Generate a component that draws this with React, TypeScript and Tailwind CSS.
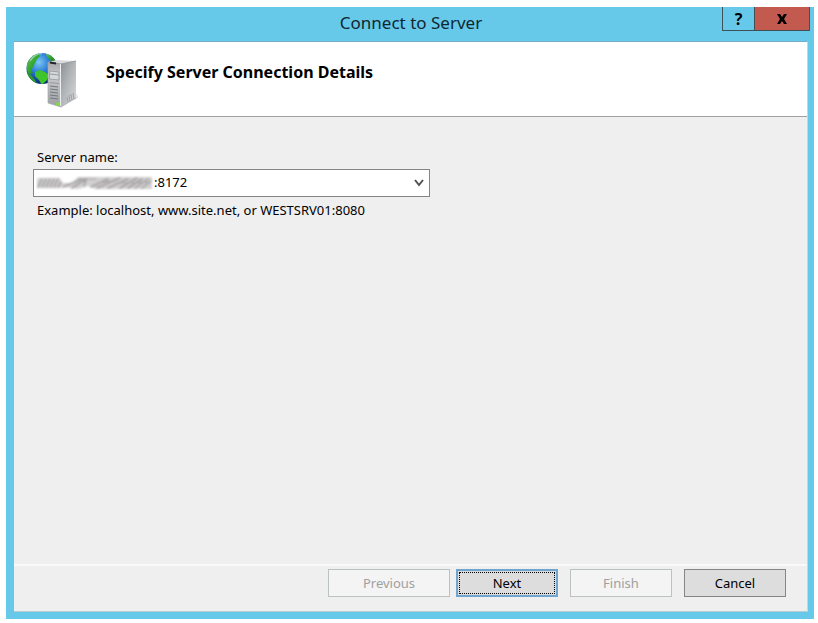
import type { ReactNode } from 'react';

function ServerIcon() {
  return (
    <svg viewBox="0 0 52 56" className="h-14 w-[52px] shrink-0" aria-hidden="true">
      <defs>
        <radialGradient id="ocean" cx="0.4" cy="0.3" r="0.7">
          <stop offset="0" stopColor="#7cc8f5" />
          <stop offset="0.5" stopColor="#2878d2" />
          <stop offset="1" stopColor="#0a2474" />
        </radialGradient>
        <linearGradient id="land" x1="0" y1="0" x2="1" y2="1">
          <stop offset="0" stopColor="#7cc46a" />
          <stop offset="0.5" stopColor="#35a832" />
          <stop offset="1" stopColor="#1d7a1e" />
        </linearGradient>
        <linearGradient id="front" x1="0" y1="0" x2="0" y2="1">
          <stop offset="0" stopColor="#a2a5a9" />
          <stop offset="0.3" stopColor="#c9ccce" />
          <stop offset="1" stopColor="#9da0a3" />
        </linearGradient>
        <linearGradient id="side" x1="0" y1="0" x2="1" y2="1">
          <stop offset="0" stopColor="#8c8f93" />
          <stop offset="0.45" stopColor="#b2b5b8" />
          <stop offset="1" stopColor="#d9dbdd" />
        </linearGradient>
        <clipPath id="globe">
          <circle cx="16" cy="16.500" r="15.5" />
        </clipPath>
      </defs>
      <path d="M34 54L52 46L51 42L34 50Z" fill="#d8d8d8" opacity="0.7" />
      <circle cx="16" cy="16.500" r="15.5" fill="url(#ocean)" />
      <g clipPath="url(#globe)" fill="url(#land)">
        <path d="M0 16L2 8L7 3L12 1L14 4L11 7L9 11L7 15L5 18L7 21L3 22Z" />
        <path d="M19 1L26 3L30 9L25 9L22 6Z" />
        <path d="M9 20L14 18L19 20L23 23L21 28L16 33L13 28L9 24Z" fill="#3fc42b" />
        <path d="M0 19L5 23L9 28L12 33H2Z" fill="#2c9a2b" />
      </g>
      <path d="M4 9Q8 2 16 1.500" stroke="#d6f4f4" strokeWidth="1.500" fill="none" opacity="0.5" />
      <path d="M22 10L31 8L50 9L35 12Z" fill="#d8dadc" />
      <path d="M22 10L35 12V55L22 51Z" fill="url(#front)" />
      <path d="M35 12L50 9V46L35 55Z" fill="url(#side)" />
      <path d="M22 10L35 12L50 9" fill="none" stroke="#8a8e92" strokeWidth="0.800" />
      <path d="M22 10V51L35 55L50 46" fill="none" stroke="#a4a7aa" strokeWidth="0.700" />
      <path d="M34.500 12V54" stroke="#eceef0" />
      <path d="M24 10.500L30 11.500" stroke="#202327" strokeWidth="1.800" />
      <path d="M23.500 19L33 20V28L23.500 27Z" fill="#d5d8db" stroke="#8a8e92" strokeWidth="0.700" />
      <path d="M23.500 22L33 23M23.500 30.500L33 31.500" stroke="#8a8e92" strokeWidth="0.800" />
      <path d="M24 34L32 35M24 37L32 38M24 40L32 41M24 43L32 44M24 46L32 47" stroke="#6c7074" strokeWidth="0.900" />
      <path d="M41 45L42 50M43 43L44 49M45 42L46 48M47 41L48 47" stroke="#94979a" strokeWidth="0.800" />
      <ellipse cx="32" cy="52" rx="2" ry="1.500" fill="#79e52b" />
    </svg>
  );
}

function Redaction() {
  return (
    <svg viewBox="0 0 118 16" className="h-4 w-[118px] shrink-0" aria-hidden="true">
      <defs>
        <filter id="smudge" x="-5%" y="-20%" width="110%" height="140%">
          <feGaussianBlur stdDeviation="0.9" />
        </filter>
      </defs>
      <g filter="url(#smudge)" fill="none" strokeLinecap="round">
        <path d="M1 3H24L26 8H36L42 2H116V14H60L52 11L42 14L28 12L24 13H1Z" fill="#d2d0d1" />
        <path
          d="M2 12L6 4M6 12L10 4M10 12L14 4M14 12L18 4M18 12L22 4M22 12L25 7M27 12L46 4M36 13L50 4M50 5L48 11M61 13L84 3M55 12L72 4M72 13L92 4M84 13L101 3M92 13L106 4M99 13L112 4M106 13L115 6"
          stroke="#9a9798"
          strokeWidth="1.500"
        />
        <path d="M42 4H60M62 8L74 6M80 8H92M96 8L112 7" stroke="#a5a2a3" strokeWidth="1.200" />
      </g>
    </svg>
  );
}

type DialogButtonProps = { children: ReactNode; className: string; disabled?: boolean };

function DialogButton({ children, className, disabled }: DialogButtonProps) {
  return (
    <button type="button" disabled={disabled} className={`h-7 text-[13px] leading-4 ${className}`}>
      {children}
    </button>
  );
}

export default function App() {
  return (
    <div className="flex h-screen flex-col bg-white pt-[7px] pr-1 pb-1 pl-1.5 font-['Noto_Sans','Open_Sans',sans-serif] text-[13px] text-black">
      <section className="flex flex-1 flex-col bg-[#66c9ea] pr-1.5 pb-[7px] pl-2" aria-labelledby="title">
        <header className="grid h-[34px] grid-cols-[1fr_auto_1fr] items-start">
          <h1 id="title" className="col-start-2 pt-1 text-[17px] leading-6 text-[#10272f]">
            Connect to Server
          </h1>
          <div className="-mr-0.5 flex h-6 justify-self-end border border-t-0 border-[#3f5157]">
            <button type="button" aria-label="Help" className="flex w-8 items-center justify-center border-r border-[#3f5157] text-base leading-5 font-bold">
              ?
            </button>
            <button type="button" aria-label="Close" className="flex w-[54px] items-center justify-center bg-[#c35a50]">
              <svg viewBox="0 0 12 10" className="h-2.5 w-3" aria-hidden="true">
                <path d="M1 0H4L6 3L8 0H11L8 5L11 10H8L6 7L4 10H1L4 5Z" fill="#000" />
              </svg>
            </button>
          </div>
        </header>

        <div className="flex flex-1 flex-col border-t border-r border-b border-t-[#70adc8] border-r-[#b4dce9] border-b-[#b4cdd5] bg-[#efefef]">
          <div className="flex h-[75px] items-start gap-7 border-b border-[#a0a0a0] bg-white pt-2.5 pl-3">
            <ServerIcon />
            <h2 className="pt-2 text-base leading-6 font-bold">Specify Server Connection Details</h2>
          </div>

          <main className="flex flex-1 flex-col items-start pt-[31px] pl-[19px]">
            <label htmlFor="server" className="pl-1 leading-[18px]">
              Server name:
            </label>
            <div className="mt-[3px] flex h-7 w-[397px] items-center border border-[#858585] bg-white pl-0.5">
              <Redaction />
              <input id="server" type="text" defaultValue=":8172" className="min-w-0 flex-1 pb-0.5 leading-5 outline-none" />
              <button type="button" aria-label="Show recent servers" className="flex h-full w-5 items-center justify-center">
                <svg viewBox="0 0 10 8" className="h-2 w-2.5" aria-hidden="true">
                  <path d="M1 1L5 6L9 1" fill="none" stroke="#505050" strokeWidth="2" />
                </svg>
              </button>
            </div>
            <p className="mt-1 pl-1 leading-[18px]">Example: localhost, www.site.net, or WESTSRV01:8080</p>
          </main>

          <footer className="flex justify-end border-t-2 border-[#f9f9f9] pt-[3px] pr-[21px] pb-3.5">
            <DialogButton disabled className="mr-1.5 w-[122px] border border-[#bcc1c4] bg-[#f4f4f4] text-[#a0a0a0]">
              Previous
            </DialogButton>
            <DialogButton className="mr-3 w-[102px] border-2 border-[#6fa5cf] bg-[#dddddd] outline-1 -outline-offset-4 outline-dotted outline-black">
              Next
            </DialogButton>
            <DialogButton disabled className="mr-3 w-[102px] border border-[#bcc1c4] bg-[#f4f4f4] text-[#a0a0a0]">
              Finish
            </DialogButton>
            <DialogButton className="w-[102px] border border-[#858585] bg-[#dddddd]">Cancel</DialogButton>
          </footer>
        </div>
      </section>
    </div>
  );
}
